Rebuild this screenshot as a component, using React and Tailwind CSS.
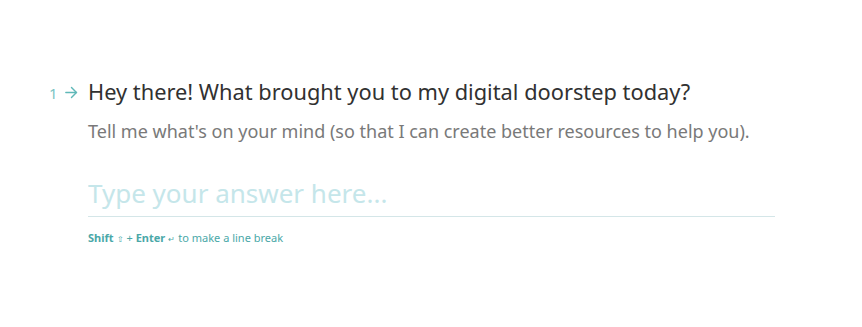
import React from "react";

const App = () => {
  return (
    <div
      className="w-[862px] h-[327px] bg-white"
      style={{ fontFamily: "'Noto Sans', 'Open Sans', sans-serif" }}
    >
      <div className="flex pt-[78px] pl-[49px]">
        <div className="flex items-center h-[28px] gap-[5px] w-[39px] text-[#5fb8b8]">
          <span className="text-[15px] leading-none text-[#7cc4c4] pt-[2px]">1</span>
          <svg width="17" height="17" viewBox="0 0 24 24" fill="none" stroke="currentColor" strokeWidth="2" strokeLinecap="round" strokeLinejoin="round">
            <path d="M4 12h15" />
            <path d="m12 5 7 7-7 7" />
          </svg>
        </div>
        <div className="flex flex-col w-[687px]">
          <h1 className="text-[21.8px] leading-[28px] text-[#313131]">
            Hey there! What brought you to my digital doorstep today?
          </h1>
          <p className="mt-[13px] text-[18px] leading-[24px] text-[#797979]">
            Tell me what's on your mind (so that I can create better resources to help you).
          </p>
          <input
            type="text"
            placeholder="Type your answer here..."
            className="mt-[32px] pb-[5px] w-full text-[26px] leading-[36px] border-b border-[#d4e6e8] outline-none placeholder:text-[#c5e6ea]"
          />
          <div className="mt-[14px] text-[11px] leading-[14px] text-[#4aa8a8]">
            <span className="font-bold">Shift</span>
            <span className="text-[8px] mx-[3px]">⇧</span>
            <span>+ </span>
            <span className="font-bold">Enter</span>
            <span className="text-[8px] mx-[3px]">↵</span>
            <span>to make a line break</span>
          </div>
        </div>
      </div>
    </div>
  );
};

export default App;
